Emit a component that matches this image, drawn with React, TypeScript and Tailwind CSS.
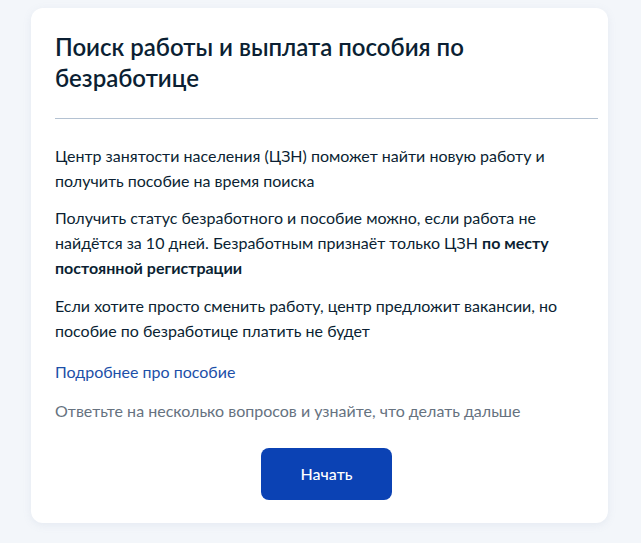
export default function App() {
  return (
    <div className="min-h-[543px] w-full bg-[#f3f6fa] pt-2 pl-[31px] pr-[33px] font-['Lato','Noto_Sans',sans-serif] text-[#0b1f33]">
      <div className="rounded-xl bg-white pt-[23px] pb-[23px] pl-6 pr-[10px] shadow-[0_2px_8px_rgba(130,150,180,0.12)]">
        <h1 className="pr-[60px] text-[24px] font-semibold leading-[31px]">
          Поиск работы и выплата пособия по безработице
        </h1>
        <div className="mt-[25px] h-px bg-[#b4c2d2]" />
        <div className="mt-[24px] text-[16px] leading-[25px]">
          <p>Центр занятости населения (ЦЗН) поможет найти новую работу и получить пособие на время поиска</p>
          <p className="mt-[12px]">
            Получить статус безработного и пособие можно, если работа не найдётся за 10 дней. Безработным признаёт только ЦЗН{' '}
            <b className="font-bold">по месту постоянной регистрации</b>
          </p>
          <p className="mt-[13px]">
            Если хотите просто сменить работу, центр предложит вакансии, но пособие по безработице платить не будет
          </p>
          <a href="#" className="mt-[16px] block text-[#1c4fa8]">
            Подробнее про пособие
          </a>
          <p className="mt-[14px] text-[#66727f]">Ответьте на несколько вопросов и узнайте, что делать дальше</p>
        </div>
        <div className="mt-[25px] flex justify-center">
          <button className="h-[52px] w-[131px] rounded-lg bg-[#0b42b4] text-[16px] font-medium text-white">Начать</button>
        </div>
      </div>
    </div>
  )
}
